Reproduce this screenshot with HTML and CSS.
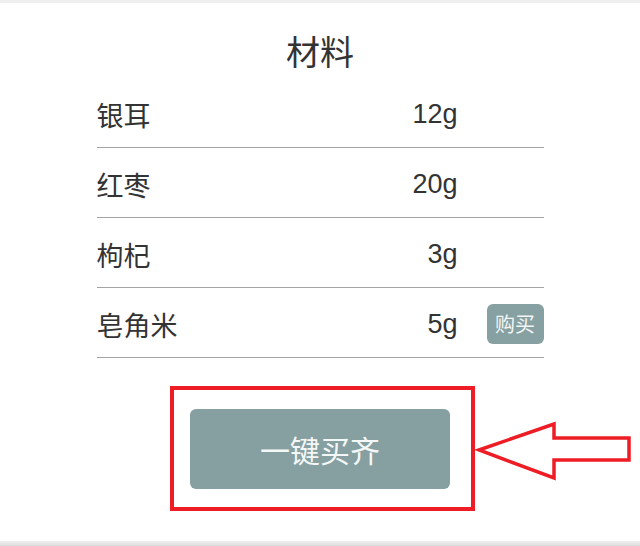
FILE: index.html
```html
<!DOCTYPE html>
<html lang="zh-CN">
<head>
<meta charset="utf-8">
<title>材料</title>
<link rel="stylesheet" href="styles.css">
</head>
<body>
<div class="page">
  <div class="top-bar"></div>
  <main class="content">
    <h1 class="title">材料</h1>
    <ul class="list">
      <li class="row"><span class="name">银耳</span><span class="amount">12g</span><span class="buy-slot"></span></li>
      <li class="row"><span class="name">红枣</span><span class="amount">20g</span><span class="buy-slot"></span></li>
      <li class="row"><span class="name">枸杞</span><span class="amount">3g</span><span class="buy-slot"></span></li>
      <li class="row"><span class="name">皂角米</span><span class="amount">5g</span><span class="buy-slot"><button class="buy">购买</button></span></li>
    </ul>
    <div class="action">
      <div class="highlight">
        <button class="buy-all">一键买齐</button>
      </div>
      <svg class="arrow" width="160" height="60" viewBox="0 0 160 60" aria-hidden="true">
        <polygon points="4,29 79,3 79,17 154,17 154,39 79,39 79,57" fill="none" stroke="#ee1c25" stroke-width="3.5" stroke-linejoin="miter"/>
      </svg>
    </div>
  </main>
  <div class="bottom-bar"></div>
</div>
</body>
</html>
```
FILE: styles.css
```css
* { box-sizing: border-box; }
html, body { margin: 0; padding: 0; background: #fff; }
body {
  font-family: "Liberation Sans", "Noto Sans CJK SC", sans-serif;
  color: #333;
}
.page {
  width: 640px;
  height: 546px;
  display: flex;
  flex-direction: column;
  overflow: hidden;
}
.top-bar { height: 3px; background: #efefef; flex: none; }
.content { flex: 1; display: flex; flex-direction: column; }
.title {
  margin: 33px 0 8px;
  font-size: 34px;
  line-height: 34px;
  font-weight: normal;
  text-align: center;
  color: #333;
}
.list {
  list-style: none;
  margin: 0 auto;
  padding: 0;
  width: 447px;
}
.row {
  height: 70px;
  padding-top: 3px;
  display: flex;
  align-items: center;
  border-bottom: 1px solid #a4a4a4;
  font-size: 27px;
}
.name { flex: 1; }
.amount { text-align: right; }
.buy-slot { width: 57px; margin-left: 29px; flex: none; }
.buy {
  width: 57px;
  height: 40px;
  border: 0;
  border-radius: 6px;
  background: #87a0a1;
  color: #f2f5f5;
  font-family: "Noto Sans CJK SC", sans-serif;
  font-size: 20px;
  padding: 0;
  line-height: 40px;
}
.action {
  margin-top: 28px;
  padding-left: 170px;
  display: flex;
  align-items: flex-start;
}
.highlight {
  width: 305px;
  height: 125px;
  border: 4px solid #ee1c25;
  padding: 19px 21px 18px 16px;
}
.buy-all {
  width: 260px;
  height: 80px;
  border: 0;
  border-radius: 6px;
  background: #869fa0;
  color: #f4f7f7;
  font-family: "Noto Sans CJK SC", sans-serif;
  font-size: 30px;
  padding: 0;
}
.arrow { margin-top: 35px; flex: none; }
.bottom-bar {
  height: 5px;
  flex: none;
  background: linear-gradient(#f0f0f0, #dcdcdc);
}
```
